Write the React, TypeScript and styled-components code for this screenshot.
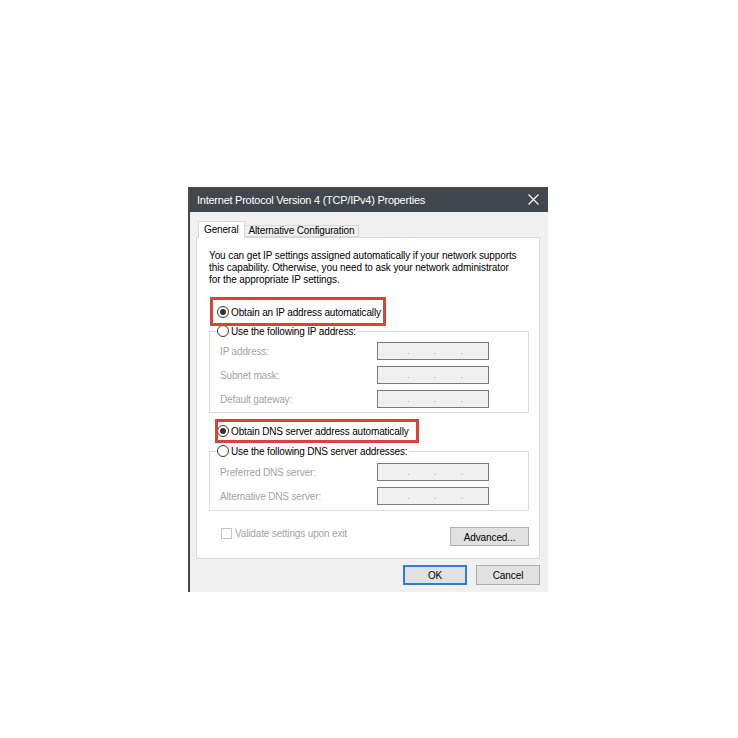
import React from "react";
import styled, { createGlobalStyle } from "styled-components";

const FONT = `"Liberation Sans", Arial, sans-serif`;

const Global = createGlobalStyle`
  html, body { margin: 0; padding: 0; background: #ffffff; }
  * { box-sizing: border-box; }
  body { font-family: ${FONT}; font-size: 10px; letter-spacing: -0.15px; color: #000; }
`;

const Page = styled.div`
  width: 738px;
  height: 738px;
  padding: 187px 0 0 188px;
  background: #ffffff;
`;

const Dialog = styled.div`
  width: 360px;
  height: 405px;
  background: #f0f0f0;
  border-left: 2px solid #4a4a4a;
  display: flex;
  flex-direction: column;
`;

const TitleBar = styled.div`
  height: 25px;
  background: #41474c;
  color: #ffffff;
  display: flex;
  align-items: center;
  justify-content: space-between;
  padding: 0 9px 0 7px;
  font-size: 11px;
  letter-spacing: -0.25px;
`;

const Body = styled.div`
  padding: 9px 8px 0 6px;
  display: flex;
  flex-direction: column;
`;

const TabRow = styled.div`
  display: flex;
  align-items: flex-end;
  padding-left: 2px;
  height: 16px;
  position: relative;
  z-index: 1;
`;

const Tab = styled.div<{ $active?: boolean }>`
  height: ${(p) => (p.$active ? "17px" : "12px")};
  margin-bottom: ${(p) => (p.$active ? "-1px" : "0")};
  padding: 0 ${(p) => (p.$active ? "5px" : "4px")};
  background: ${(p) => (p.$active ? "#ffffff" : "#f0f0f0")};
  border: 1px solid #d9d9d9;
  border-bottom: ${(p) => (p.$active ? "none" : "1px solid #d9d9d9")};
  ${(p) => (!p.$active ? "border-left: none;" : "")}
  display: flex;
  align-items: center;
  font-size: 10px;
  line-height: 12px;
  white-space: nowrap;
`;

const Panel = styled.div`
  position: relative;
  width: 344px;
  height: 322px;
  background: #ffffff;
  border: 1px solid #d9d9d9;
  padding: 12px 0 0 12px;
  display: flex;
  flex-direction: column;
`;

const Intro = styled.p`
  margin: 0;
  font-size: 10px;
  line-height: 12px;
  letter-spacing: -0.1px;
  white-space: nowrap;
`;

const RadioRow = styled.div<{ $mt: number }>`
  display: flex;
  align-items: center;
  gap: 2px;
  height: 16px;
  margin: ${(p) => p.$mt}px 0 0 8px;
  font-size: 10px;
  white-space: nowrap;
`;

const Radio = styled.span<{ $checked?: boolean }>`
  width: 12px;
  height: 12px;
  border-radius: 50%;
  border: 1px solid #333333;
  background: #ffffff;
  display: flex;
  align-items: center;
  justify-content: center;
  flex: none;
  &::after {
    content: "";
    width: 6px;
    height: 6px;
    border-radius: 50%;
    background: ${(p) => (p.$checked ? "#333333" : "transparent")};
  }
`;

const Group = styled.div<{ $mt: number; $pb: number }>`
  width: 320px;
  margin-top: ${(p) => p.$mt}px;
  border: 1px solid #dcdcdc;
  padding: 0 0 ${(p) => p.$pb}px 10px;
  display: flex;
  flex-direction: column;
`;

const Legend = styled.div`
  display: flex;
  align-items: center;
  gap: 2px;
  height: 14px;
  margin: -8px 0 0 -3px;
  padding-right: 2px;
  width: fit-content;
  background: #ffffff;
  font-size: 10px;
  white-space: nowrap;
`;

const Fields = styled.div<{ $mt: number }>`
  display: grid;
  grid-template-columns: 157px 112px;
  row-gap: 6px;
  margin-top: ${(p) => p.$mt}px;
  align-items: center;
`;

const FieldLabel = styled.span`
  color: #a3a3a3;
  font-size: 10px;
  white-space: nowrap;
`;

const IpField = styled.div`
  height: 18px;
  background: #f0f0f0;
  border: 1px solid #7a7a7a;
  display: flex;
  align-items: flex-end;
  padding: 0 0 3px 29px;
  gap: 24.5px;
  color: #9a9a9a;
  font-size: 9px;
  line-height: 9px;
`;

const Highlight = styled.div<{ $x: number; $y: number; $w: number; $h: number }>`
  position: absolute;
  left: ${(p) => p.$x}px;
  top: ${(p) => p.$y}px;
  width: ${(p) => p.$w}px;
  height: ${(p) => p.$h}px;
  border: 3px solid #d6433d;
  pointer-events: none;
`;

const BottomRow = styled.div`
  width: 320px;
  margin-top: 16px;
  display: flex;
  justify-content: space-between;
  align-items: flex-start;
`;

const CheckLabel = styled.div`
  display: flex;
  align-items: center;
  gap: 3px;
  margin-left: 12px;
  color: #a3a3a3;
  font-size: 10px;
  height: 12px;
`;

const Checkbox = styled.span`
  width: 11px;
  height: 11px;
  border: 1px solid #c4c4c4;
  background: #ffffff;
  flex: none;
`;

const Button = styled.button<{ $w: number; $h: number; $default?: boolean }>`
  width: ${(p) => p.$w}px;
  height: ${(p) => p.$h}px;
  background: #e1e1e1;
  border: ${(p) => (p.$default ? "2px solid #2b7fce" : "1px solid #adadad")};
  font-family: ${FONT};
  font-size: 10px;
  letter-spacing: -0.1px;
  color: #000;
  padding: 1px 0 0;
  display: flex;
  align-items: center;
  justify-content: center;
`;

const Footer = styled.div`
  display: flex;
  justify-content: flex-end;
  gap: 9px;
  margin-top: 6px;
`;

const CloseIcon = () => (
  <svg width="11" height="11" viewBox="0 0 11 11">
    <path d="M0.5 0.5 L10.5 10.5 M10.5 0.5 L0.5 10.5" stroke="#ffffff" strokeWidth="1.1" fill="none" />
  </svg>
);

const IpDots = () => (
  <IpField>
    <span>.</span>
    <span>.</span>
    <span>.</span>
  </IpField>
);

export default function App() {
  return (
    <>
      <Global />
      <Page>
        <Dialog>
          <TitleBar>
            <span>Internet Protocol Version 4 (TCP/IPv4) Properties</span>
            <CloseIcon />
          </TitleBar>
          <Body>
            <TabRow>
              <Tab $active>General</Tab>
              <Tab>Alternative Configuration</Tab>
            </TabRow>
            <Panel>
              <Intro>
                You can get IP settings assigned automatically if your network supports
                <br />
                this capability. Otherwise, you need to ask your network administrator
                <br />
                for the appropriate IP settings.
              </Intro>
              <RadioRow $mt={18}>
                <Radio $checked />
                <span>Obtain an IP address automatically</span>
              </RadioRow>
              <Group $mt={11} $pb={4}>
                <Legend>
                  <Radio />
                  <span>Use the following IP address:</span>
                </Legend>
                <Fields $mt={4}>
                  <FieldLabel>IP address:</FieldLabel>
                  <IpDots />
                  <FieldLabel>Subnet mask:</FieldLabel>
                  <IpDots />
                  <FieldLabel>Default gateway:</FieldLabel>
                  <IpDots />
                </Fields>
              </Group>
              <RadioRow $mt={10}>
                <Radio $checked />
                <span>Obtain DNS server address automatically</span>
              </RadioRow>
              <Group $mt={12} $pb={5}>
                <Legend>
                  <Radio />
                  <span>Use the following DNS server addresses:</span>
                </Legend>
                <Fields $mt={5}>
                  <FieldLabel>Preferred DNS server:</FieldLabel>
                  <IpDots />
                  <FieldLabel>Alternative DNS server:</FieldLabel>
                  <IpDots />
                </Fields>
              </Group>
              <BottomRow>
                <CheckLabel>
                  <Checkbox />
                  <span>Validate settings upon exit</span>
                </CheckLabel>
                <Button $w={79} $h={19}>Advanced...</Button>
              </BottomRow>
              <Highlight $x={13} $y={59} $w={176} $h={29} />
              <Highlight $x={18} $y={181} $w={204} $h={24} />
            </Panel>
            <Footer>
              <Button $w={64} $h={20} $default>OK</Button>
              <Button $w={64} $h={20}>Cancel</Button>
            </Footer>
          </Body>
        </Dialog>
      </Page>
    </>
  );
}
